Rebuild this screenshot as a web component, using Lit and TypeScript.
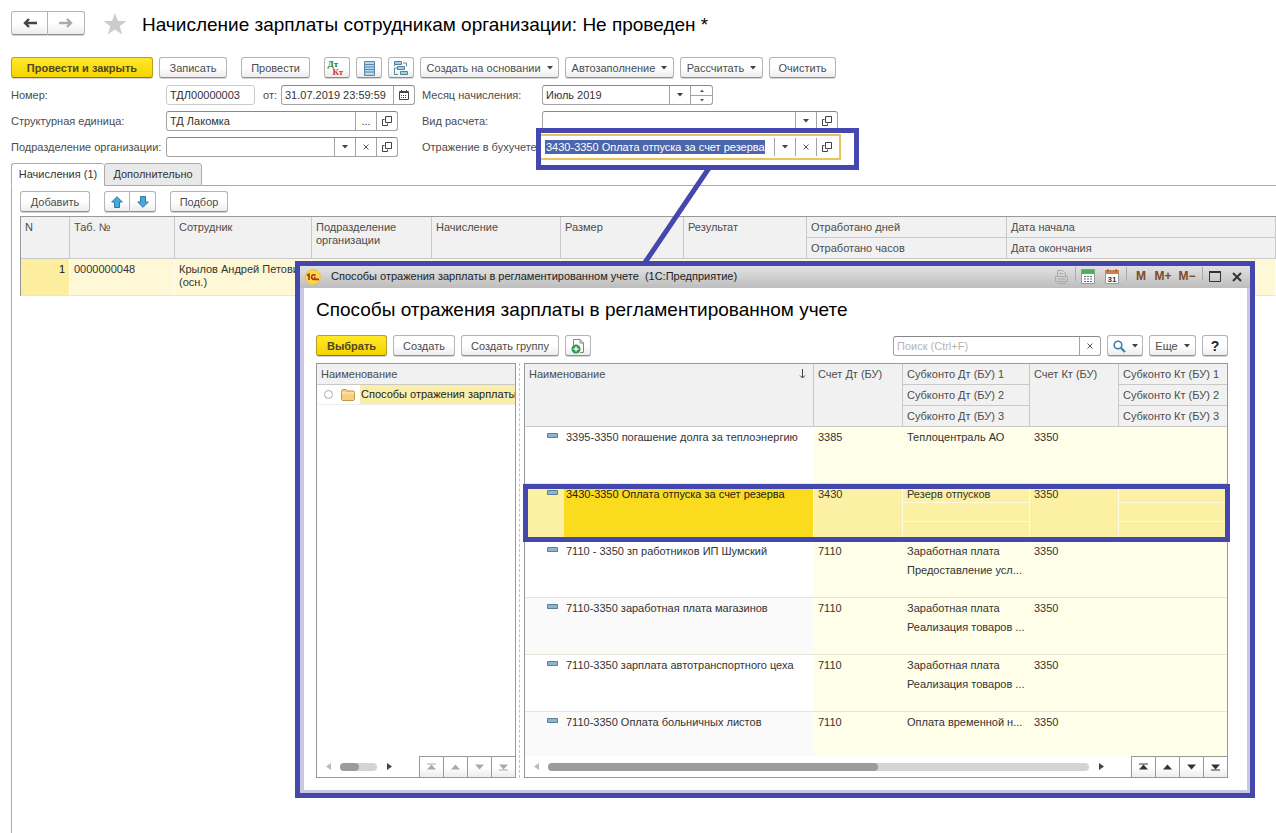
import { LitElement, html, css, svg } from "lit";
import { customElement, state } from "lit/decorators.js";
import { classMap } from "lit/directives/class-map.js";

interface Method {
  name: string;
  debit: string;
  sub1: string;
  sub2: string;
  credit: string;
}

const methods: Method[] = [
  { name: "3395-3350 погашение долга за теплоэнергию", debit: "3385", sub1: "Теплоцентраль АО", sub2: "", credit: "3350" },
  { name: "3430-3350 Оплата отпуска за счет резерва", debit: "3430", sub1: "Резерв отпусков", sub2: "", credit: "3350" },
  { name: "7110 - 3350 зп работников ИП Шумский", debit: "7110", sub1: "Заработная плата", sub2: "Предоставление усл...", credit: "3350" },
  { name: "7110-3350 заработная плата магазинов", debit: "7110", sub1: "Заработная плата", sub2: "Реализация товаров ...", credit: "3350" },
  { name: "7110-3350 зарплата автотранспортного цеха", debit: "7110", sub1: "Заработная плата", sub2: "Реализация товаров ...", credit: "3350" },
  { name: "7110-3350 Оплата больничных листов", debit: "7110", sub1: "Оплата временной н...", sub2: "", credit: "3350" },
];

const caret = html`<svg class="caret" width="6" height="4" viewBox="0 0 6 4"><path d="M0 0h6L3 3.6z" fill="#444" /></svg>`;
const openIcon = html`<svg width="10" height="10" viewBox="0 0 10 10" fill="none" stroke="#444" stroke-width="1"><path d="M3.5.5h6v6h-6z" /><path d="M2.5 3.5h-2v6h5v-2" /></svg>`;
const crossIcon = html`<svg width="6" height="6" viewBox="0 0 6 6"><path d="M.5.5l5 5M5.500.5l-5 5" stroke="#555" fill="none" /></svg>`;
const navShapes = [
  svg`<path d="M4.500 1.500l4.500 5H0z" /><path d="M0 1h9" stroke="currentColor" />`,
  svg`<path d="M4.500 1.500l4.500 5H0z" />`,
  svg`<path d="M0 1.500h9l-4.500 5z" />`,
  svg`<path d="M0 1.500h9l-4.500 5z" /><path d="M0 7h9" stroke="currentColor" />`,
];
const navLabels = ["В начало", "Вверх", "Вниз", "В конец"];

@customElement("app-root")
export class AppRoot extends LitElement {
  @state() private selected = 1;

  static styles = css`
    :host {
      position: relative;
      min-height: 100vh;
      overflow: hidden;
      box-sizing: border-box;
      background: #fff;
      color: #4c4c4c;
      font-family: "Liberation Sans", Arial, sans-serif;
      font-size: 11px;
      line-height: 13px;
      display: flex;
      flex-direction: column;
    }
    *, *::before { box-sizing: border-box; }
    svg { display: block; flex: none; }
    h1, h2 { margin: 0; color: #000; font-weight: 400; font-size: 19px; line-height: 24px; white-space: nowrap; }
    h1 { padding-top: 2px; }
    button, input { font: inherit; color: inherit; margin: 0; }
    button {
      display: flex; align-items: center; justify-content: center;
      padding: 0; white-space: nowrap;
      border: 1px solid #b4b4b4; border-bottom-color: #8f8f8f; border-radius: 3px;
      background: linear-gradient(#fff 50%, #ededed);
      box-shadow: 0 1px 0 #d4d4d4;
      height: 21px;
    }
    .primary {
      background: linear-gradient(#ffe928, #f5d400);
      border-color: #b89e1e; border-bottom-color: #8c7614;
      font-weight: 700; color: #524622;
    }
    .drop { gap: 6px; }
    .head { display: flex; align-items: flex-start; height: 35px; padding: 11px 11px 0; }
    .pair { display: flex; }
    .pair button:first-child { border-radius: 3px 0 0 3px; }
    .pair button:last-child { border-radius: 0 3px 3px 0; border-left-width: 0; }
    .history button { width: 37px; height: 24px; }
    .star { margin: 2px 15px 0 18px; }
    .toolbar { display: grid; column-gap: 6px; margin: 22px 11px 0; }
    .toolbar > button, .row-tools > button { padding-top: 1px; }
    .main-tools { grid-template-columns: 142px 76px 77px 26px 26px 26px 139px 109px 83px 67px; }
    .main-tools .wide-gap { margin-right: 8px; }
    .postings { display: block; width: 19px; height: 17px; font: 700 9px/8px "Liberation Serif", serif; text-align: left; }
    .postings b { display: block; color: #2b7a22; }
    .postings b + b { color: #cf3434; padding-left: 5px; }

    .form { display: grid; grid-template-columns: 155px 249px 7px 120px 296px; row-gap: 6px; margin: 7px 11px 0; align-items: center; }
    .col-b { grid-column: 4; }
    .field { display: flex; height: 20px; border: 1px solid #a3a3a3; border-top-color: #888; border-radius: 3px; background: #fff; min-width: 0; color: #333; }
    .field input { flex: 1; min-width: 0; width: 0; border: 0; padding: 0 0 0 3px; background: transparent; outline: 0; }
    .field button { flex: none; width: 21px; height: 100%; border: 0; border-left: 1px solid #a3a3a3; border-radius: 0; background: none; box-shadow: none; }
    .field-232 { width: 232px; }
    .date-row { display: flex; align-items: center; }
    .number { width: 89px; border-color: #ccc; }
    .date-row label { margin: 0 4px 0 8px; }
    .date { width: 134px; }
    .month { width: 171px; }
    .spin-pair { display: flex; flex-direction: column; border-left: 1px solid #a3a3a3; }
    .field .spin-pair button { height: 9px; border-left: 0; }
    .field .spin-pair button + button { border-top: 1px solid #a3a3a3; }
    .focus-wrap { position: relative; }
    .focused { border-color: transparent; border-radius: 0; outline: 2px solid #e6c55c; outline-offset: 1px; }
    .focused input { flex: none; width: 220px; margin: 2px auto 2px 2px; padding: 0 0 0 1px; background: #4b66ab; color: #fff; }
    .mark { position: absolute; border: 5px solid #4347ae; pointer-events: none; }
    .mark-field { left: -6px; right: -21px; top: -9px; bottom: -13px; }
    .mark-line { position: absolute; left: 96px; top: 31px; pointer-events: none; }

    .tabs { display: flex; margin: 6px 0 0 11px; height: 23px; }
    .tabs::after { content: ""; flex: 1; border-bottom: 1px solid #aaa; }
    .tabs button { height: 23px; border: 1px solid #aaa; border-radius: 3px 3px 0 0; box-shadow: none; background: #e9e9e9; color: #333; width: 98px; }
    .tabs .active { width: 93px; background: #fff; border-bottom-color: #fff; border-right: 0; }
    .panel { flex: 1; margin-left: 11px; border-left: 1px solid #aaa; padding: 5px 0 0 8px; }
    .row-tools { display: grid; grid-template-columns: 70px 52px 58px; column-gap: 14px; }
    .pair.move button { width: 26px; }

    table { border-collapse: separate; border-spacing: 0; table-layout: fixed; width: 100%; }
    th { background: #f1f1f1; font-weight: 400; text-align: left; vertical-align: top; padding: 4px 4px 3px; border-right: 1px solid #c9c9c9; border-bottom: 1px solid #c9c9c9; height: 21px; }
    td { vertical-align: top; padding: 4px; }
    .lines { margin-top: 4px; border: 1px solid #999; border-width: 1px 0 0 1px; }
    .lines td { background: #fff8d6; height: 37px; border-bottom: 1px solid #ece6c8; color: #333; border-right: 1px solid #fffcea; }
    .lines .num { background: #fdee9f; text-align: right; color: #111; }
    .c49 { width: 49px; } .c105 { width: 105px; } .c137 { width: 137px; } .c120 { width: 120px; }
    .c129 { width: 129px; } .c123 { width: 123px; } .c200 { width: 200px; }

    .dialog { position: absolute; left: 295px; right: 21px; top: 261px; bottom: 35px; border: 5px solid #4347ae; background: #c9c7e3; display: flex; flex-direction: column; }
    .caption { display: flex; align-items: center; height: 22px; background: linear-gradient(#e2e2e2, #bdbdbd); padding: 0 1px 0 5px; color: #222; }
    .caption > span { flex: 1; padding: 0 0 2px 10px; white-space: pre; }
    .caption button { border: 0; background: none; box-shadow: none; height: 20px; font-weight: 700; font-size: 12px; color: #7d4a26; }
    .caption .sys { display: grid; grid-template-columns: 20px 8px 18px 6px 18px 10px 20px 24px 24px 6px 20px 24px; align-items: center; justify-items: center; flex: none; padding-bottom: 1px; }
    .sep { width: 1px; height: 14px; background: #aaa; align-self: start; }
    .body { flex: 1; min-height: 0; margin: 0 3px 3px 4px; background: #fff; padding: 10px 19px 12px 12px; display: flex; flex-direction: column; }
    .dialog-tools { grid-template-columns: 71px 62px 98px 26px 1fr 208px 36px 47px 26px; margin: 13px 0 0; }
    .dialog-tools .search { grid-column: 6; margin-top: 1px; }
    .search input::placeholder { color: #b5b5b5; }
    .help { font-size: 14px; font-weight: 700; color: #222; }
    .split { flex: 1; min-height: 0; margin-top: 7px; display: grid; grid-template-columns: 200px 8px 1fr; }
    .splitter { border-left: 1px dashed #c4c4c4; margin-left: 3px; }
    .pane { position: relative; min-width: 0; min-height: 0; display: flex; flex-direction: column; border: 1px solid #999; }
    .clip { flex: 1; min-height: 0; overflow: hidden; }
    .pane th:last-child { border-right: 0; }
    .pane .full { border-right: 1px solid #c9c9c9; }
    .tree td { padding: 0; height: 20px; border-bottom: 1px solid #eee; }
    .tree-row { display: flex; align-items: center; height: 19px; padding-left: 7px; color: #222; }
    .dot { width: 9px; height: 9px; border: 1px solid #aaa; border-radius: 50%; margin-right: 8px; }
    .tree-row span:last-child { flex: 1; margin-left: 5px; padding: 3px 0 3px 1px; background: #fbeeaa; white-space: nowrap; overflow: hidden; }
    .c289 { width: 289px; } .c89 { width: 89px; } .c127 { width: 127px; }
    .sort { float: right; margin-right: 3px; }
    .grid tbody td { height: 19px; padding: 4px 0 0 4px; background: #fffee9; color: #333; white-space: nowrap; overflow: hidden; }
    .grid tbody .name { background: #fff; padding: 0; }
    .grid tbody.odd .name { background: #fafafa; }
    .grid tbody .last { border-bottom: 1px solid #e6e6d8; }
    .grid tbody.selected td { background: #fcf0a4; border-right: 1px solid #fffbe0; }
    .grid tbody.selected .sub { border-bottom: 1px solid #fffbe0; }
    .name-row { display: grid; grid-template-columns: 39px 1fr; height: 56px; align-items: start; }
    .name-row span { padding: 4px 0 0 2px; height: 56px; }
    .selected .name-row span { background: #fadb1e; color: #222; }
    .name-row svg { margin: 6px 0 0 22px; }
    .foot { display: flex; align-items: center; height: 21px; background: #fff; padding-left: 9px; }
    .track { height: 8px; border-radius: 4px; background: #d4d4d4; margin: 0 10px 0 9px; width: 37px; }
    .thumb { height: 8px; border-radius: 4px; background: #9b9b9b; width: 19px; }
    .grid-foot .track { flex: 1; }
    .grid-foot .thumb { width: 61%; }
    .jump { display: flex; margin-left: auto; border-top: 1px solid #999; color: #aaa; height: 21px; }
    .grid-foot .jump { color: #333; margin-left: 27px; }
    .jump button { width: 24px; height: 20px; border: 0; border-left: 1px solid #999; border-radius: 0; box-shadow: none; }
    .mark-row { left: -2px; right: -3px; top: 120px; height: 58px; }
  `;

  private jump() {
    return html`<div class="jump">
      ${navShapes.map((s, i) => html`<button aria-label=${navLabels[i]}><svg width="9" height="8" viewBox="0 0 9 8" fill="currentColor">${s}</svg></button>`)}
    </div>`;
  }

  private arrow(right: boolean, color: string) {
    return html`<svg width="5" height="7" viewBox="0 0 5 7"><path d=${right ? "M0 0l5 3.500-5 3.500z" : "M5 0L0 3.500 5 7z"} fill=${color} /></svg>`;
  }

  private method(m: Method, i: number) {
    const pick = () => (this.selected = i);
    const selected = this.selected === i;
    return html`<tbody class=${classMap({ selected, odd: !selected && i % 2 === 1 })} @click=${pick}>
      <tr>
        <td class="name last" rowspan="3">
          <div class="name-row">
            <svg width="11" height="5" viewBox="0 0 11 5"><path d="M.5.5h10v4H.5z" fill="#8ab6d0" stroke="#5b8196" /></svg>
            <span>${m.name}</span>
          </div>
        </td>
        <td class="last" rowspan="3">${m.debit}</td>
        <td class="sub">${m.sub1}</td>
        <td class="last" rowspan="3">${m.credit}</td>
        <td class="sub"></td>
      </tr>
      <tr><td class="sub">${m.sub2}</td><td class="sub"></td></tr>
      <tr><td class="last"></td><td class="last"></td></tr>
    </tbody>`;
  }

  private dialog() {
    return html`<section class="dialog" role="dialog" aria-labelledby="dlg">
      <div class="caption">
        <svg width="16" height="16" viewBox="0 0 16 16"><circle cx="8" cy="8" r="7.500" fill="#fbd84a" stroke="#f0c040" /><path d="M2 6.500l2-1.300v5.800M10.500 6.500a2.300 2.300 0 1 0-1.500 3.900h5M10.500 8.600h-1.500" fill="none" stroke="#b5301c" stroke-width="1.600" /></svg>
        <span>Способы отражения зарплаты в регламентированном учете  (1С:Предприятие)</span>
        <div class="sys">
          <button aria-label="Печать"><svg width="15" height="14" viewBox="0 0 15 14" fill="none" stroke="#aaa"><path d="M3.500 6V.5h5l3 2.500v3M1.500 6.500h12v5h-12zM3 13.500h9M5 3.500h4M4 9h7" /></svg></button>
          <i class="sep"></i>
          <button aria-label="Калькулятор"><svg width="14" height="15" viewBox="0 0 14 15"><path d="M.5.5h13v14H.5z" fill="#fff" stroke="#8f9a90" /><path d="M1 1h12v4H1z" fill="#46b163" /><path d="M3 7.500h2M6 7.500h2M9 7.500h2M3 10h2M6 10h2M9 10h2M3 12.500h2M6 12.500h2M9 12.500h2" stroke="#667" /></svg></button>
          <i></i>
          <button aria-label="Календарь"><svg width="14" height="15" viewBox="0 0 14 15"><path d="M.5 1.500h13v13H.5z" fill="#fff" stroke="#999" /><path d="M0 1h14v4H0z" fill="#c97f50" /><path d="M3 0v3M11 0v3" stroke="#8d5330" /><text x="7" y="12.500" font-size="8" text-anchor="middle" fill="#333">31</text></svg></button>
          <i class="sep"></i>
          <button>M</button><button>M+</button><button>M−</button>
          <i class="sep"></i>
          <button aria-label="Развернуть"><svg width="12" height="11" viewBox="0 0 12 11"><path d="M.5 1h11v9.500H.5z" fill="none" stroke="#333" /><path d="M0 1h12" stroke="#333" stroke-width="2" /></svg></button>
          <button aria-label="Закрыть"><svg width="10" height="10" viewBox="0 0 10 10"><path d="M1 1l8 8M9 1L1 9" stroke="#333" stroke-width="2" /></svg></button>
        </div>
      </div>
      <div class="body">
        <h2 id="dlg">Способы отражения зарплаты в регламентированном учете</h2>
        <div class="toolbar dialog-tools">
          <button class="primary">Выбрать</button>
          <button>Создать</button>
          <button>Создать группу</button>
          <button aria-label="Создать копированием"><svg width="14" height="16" viewBox="0 0 14 16"><path d="M2.500 7V1.500h6.500l3.500 3.500v9.500H9M9 1.500V5h3.500" fill="none" stroke="#7a8a84" /><circle cx="5" cy="11" r="4.500" fill="#2f9c48" /><path d="M5 8.500v5M2.500 11h5" stroke="#fff" stroke-width="1.400" /></svg></button>
          <div class="field search"><input aria-label="Поиск" placeholder="Поиск (Ctrl+F)" /><button aria-label="Очистить поиск">${crossIcon}</button></div>
          <button class="drop" aria-label="Найти"><svg width="13" height="13" viewBox="0 0 13 13" fill="none" stroke="#3c7ea8"><circle cx="5" cy="5" r="3.800" stroke-width="1.600" /><path d="M8 8l4 4" stroke-width="2.200" /></svg>${caret}</button>
          <button class="drop">Еще ${caret}</button>
          <button class="help">?</button>
        </div>
        <div class="split">
          <div class="pane">
            <div class="clip">
              <table class="tree">
                <thead><tr><th>Наименование</th></tr></thead>
                <tbody><tr><td><div class="tree-row">
                  <span class="dot"></span>
                  <svg width="14" height="12" viewBox="0 0 14 12"><path d="M.5 10.500v-9l1-1h3.500l1 1.500h6.500l1 1v7.500l-1 1h-11z" fill="#f9cf7c" stroke="#c4954a" /><path d="M.5 4h13" stroke="#fff0c4" /></svg>
                  <span>Способы отражения зарплаты</span>
                </div></td></tr></tbody>
              </table>
            </div>
            <div class="foot">
              ${this.arrow(false, "#bbb")}
              <div class="track"><div class="thumb"></div></div>
              ${this.arrow(true, "#444")}
              ${this.jump()}
            </div>
          </div>
          <div class="splitter"></div>
          <div class="pane">
            <div class="clip">
              <table class="grid">
                <colgroup><col class="c289" /><col class="c89" /><col class="c127" /><col class="c89" /><col /></colgroup>
                <thead>
                  <tr>
                    <th rowspan="3">Наименование <svg class="sort" width="7" height="11" viewBox="0 0 7 11"><path d="M3.500 1v9M1 7.500l2.500 2.500L6 7.500" fill="none" stroke="#444" /></svg></th>
                    <th rowspan="3">Счет Дт (БУ)</th><th>Субконто Дт (БУ) 1</th>
                    <th rowspan="3">Счет Кт (БУ)</th><th>Субконто Кт (БУ) 1</th>
                  </tr>
                  <tr><th>Субконто Дт (БУ) 2</th><th>Субконто Кт (БУ) 2</th></tr>
                  <tr><th>Субконто Дт (БУ) 3</th><th>Субконто Кт (БУ) 3</th></tr>
                </thead>
                ${methods.map((m, i) => this.method(m, i))}
              </table>
            </div>
            <div class="foot grid-foot">
              ${this.arrow(false, "#bbb")}
              <div class="track"><div class="thumb"></div></div>
              ${this.arrow(true, "#444")}
              ${this.jump()}
            </div>
            <div class="mark mark-row"></div>
          </div>
        </div>
      </div>
    </section>`;
  }

  render() {
    return html`
      <header class="head">
        <div class="pair history">
          <button aria-label="Назад"><svg width="14" height="10" viewBox="0 0 14 10" fill="none" stroke="#444" stroke-width="2.400"><path d="M2 5H14M6 1L2 5l4 4" /></svg></button>
          <button aria-label="Вперед"><svg width="14" height="10" viewBox="0 0 14 10" fill="none" stroke="#aaa" stroke-width="2.400"><path d="M12 5H0M8 1l4 4-4 4" /></svg></button>
        </div>
        <svg class="star" width="24" height="22" viewBox="0 0 24 22"><path d="M12 0l2.900 8H23.500l-6.800 5.200 2.500 8.300L12 16.500l-7.200 5 2.500-8.300L.5 8h8.600z" fill="#ccc" /></svg>
        <h1>Начисление зарплаты сотрудникам организации: Не проведен *</h1>
      </header>

      <div class="toolbar main-tools">
        <button class="primary">Провести и закрыть</button>
        <button class="wide-gap">Записать</button>
        <button class="wide-gap">Провести</button>
        <button aria-label="Проводки"><span class="postings"><b>Дт</b><b>Кт</b></span></button>
        <button aria-label="Список"><svg width="11" height="15" viewBox="0 0 11 15"><path d="M.5.5h10v14H.5z" fill="#b9d6ea" stroke="#5787a8" /><path d="M1 3.500h9M1 6h9M1 8.500h9M1 11h9" stroke="#5787a8" /></svg></button>
        <button aria-label="Структура"><svg width="16" height="15" viewBox="0 0 16 15"><path d="M4.500 7H1.500v6.500H5M10 2h3.500v3.500M1.500 5V3.500" fill="none" stroke="#5787a8" /><path d="M1.500.5h7v3h-7zM4.500 5.500h7v3h-7zM7.500 10.500h7v3h-7z" fill="#a9cbe2" stroke="#4f81a3" /></svg></button>
        <button class="drop">Создать на основании ${caret}</button>
        <button class="drop">Автозаполнение ${caret}</button>
        <button class="drop">Рассчитать ${caret}</button>
        <button>Очистить</button>
      </div>

      <div class="form">
        <label for="num">Номер:</label>
        <div class="date-row">
          <div class="field number"><input id="num" .value=${"ТДЛ00000003"} /></div>
          <label for="date">от:</label>
          <div class="field date"><input id="date" .value=${"31.07.2019 23:59:59"} />
            <button aria-label="Выбрать дату"><svg width="10" height="10" viewBox="0 0 10 10"><path d="M.5 1.500h9v8h-9z" fill="none" stroke="#444" /><path d="M0 2.500h10M2.500 0v2M7.500 0v2" stroke="#444" /><path d="M2 5.500h6M2 7.500h6" stroke="#444" stroke-dasharray="1 1" /></svg></button></div>
        </div>
        <label class="col-b" for="month">Месяц начисления:</label>
        <div class="field month"><input id="month" .value=${"Июль 2019"} />
          <button aria-label="Выбрать месяц">${caret}</button>
          <div class="spin-pair">
            <button aria-label="Больше"><svg width="4" height="3" viewBox="0 0 4 3"><path d="M0 3l2-2.500L4 3z" fill="#555" /></svg></button>
            <button aria-label="Меньше"><svg width="4" height="3" viewBox="0 0 4 3"><path d="M0 0l2 2.500L4 0z" fill="#555" /></svg></button>
          </div>
        </div>

        <label for="unit">Структурная единица:</label>
        <div class="field field-232"><input id="unit" .value=${"ТД Лакомка"} /><button aria-label="Выбрать">...</button><button aria-label="Открыть">${openIcon}</button></div>
        <label class="col-b" for="calc">Вид расчета:</label>
        <div class="field"><input id="calc" /><button aria-label="Выбрать">${caret}</button><button aria-label="Открыть">${openIcon}</button></div>

        <label for="dept">Подразделение организации:</label>
        <div class="field field-232"><input id="dept" /><button aria-label="Выбрать">${caret}</button><button aria-label="Очистить">${crossIcon}</button><button aria-label="Открыть">${openIcon}</button></div>
        <label class="col-b" for="refl">Отражение в бухучете:</label>
        <div class="focus-wrap">
          <div class="field focused"><input id="refl" .value=${"3430-3350 Оплата отпуска за счет резерва"} /><button aria-label="Выбрать">${caret}</button><button aria-label="Очистить">${crossIcon}</button><button aria-label="Открыть">${openIcon}</button></div>
          <div class="mark mark-field"></div>
          <svg class="mark-line" width="76" height="96" viewBox="0 0 76 96"><path d="M71 0L6 96" stroke="#4347ae" stroke-width="5" /></svg>
        </div>
      </div>

      <div class="tabs" role="tablist">
        <button class="active" role="tab" aria-selected="true">Начисления (1)</button>
        <button role="tab" aria-selected="false">Дополнительно</button>
      </div>
      <div class="panel">
        <div class="row-tools">
          <button>Добавить</button>
          <div class="pair move">
            <button aria-label="Выше"><svg width="12" height="12" viewBox="0 0 12 12"><path d="M6 .7l5.300 5.300H8.500v5.500h-5V6H.7z" fill="#4aa8dc" stroke="#2b78a6" /></svg></button>
            <button aria-label="Ниже"><svg width="12" height="12" viewBox="0 0 12 12"><path d="M6 11.300L.7 6h2.800V.5h5V6h2.800z" fill="#4aa8dc" stroke="#2b78a6" /></svg></button>
          </div>
          <button>Подбор</button>
        </div>
        <table class="lines">
          <colgroup><col class="c49" /><col class="c105" /><col class="c137" /><col class="c120" /><col class="c129" /><col class="c123" /><col class="c123" /><col class="c200" /><col /></colgroup>
          <thead>
            <tr>
              <th rowspan="2">N</th><th rowspan="2">Таб. №</th><th rowspan="2">Сотрудник</th><th rowspan="2">Подразделение организации</th>
              <th rowspan="2">Начисление</th><th rowspan="2">Размер</th><th rowspan="2">Результат</th><th>Отработано дней</th><th>Дата начала</th>
            </tr>
            <tr><th>Отработано часов</th><th>Дата окончания</th></tr>
          </thead>
          <tbody>
            <tr><td class="num">1</td><td>0000000048</td><td>Крылов Андрей Петович (осн.)</td><td></td><td></td><td></td><td></td><td></td><td></td></tr>
          </tbody>
        </table>
      </div>
      ${this.dialog()}
    `;
  }
}
